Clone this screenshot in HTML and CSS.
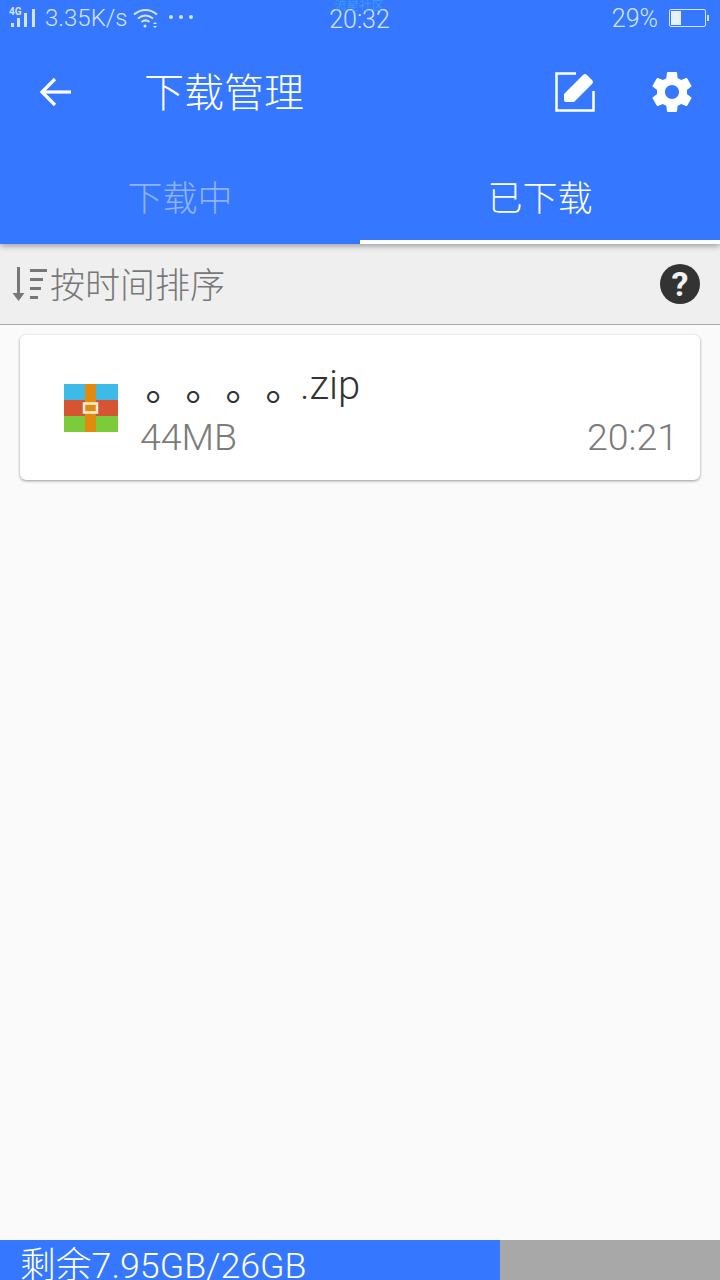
FILE: index.html
```html
<!DOCTYPE html>
<html>
<head>
  <meta charset="utf-8">
  <link rel="stylesheet" href="styles.css">
</head>
<body>
  <div class="page">
    <header class="top">
      <!-- status bar -->
      <div class="status">
        <div class="status-left">
          <svg class="signal" width="28" height="20" viewBox="0 0 28 20">
            <rect x="1" y="15" width="3" height="4" fill="#d5e3ff"/>
            <rect x="7" y="10" width="3" height="9" fill="#d5e3ff"/>
            <rect x="14" y="5" width="3" height="14" fill="#d5e3ff"/>
            <rect x="22" y="1" width="3" height="18" fill="#d5e3ff"/>
          </svg>
          <span class="mini-net">4G</span>
          <span class="speed">3.35K/s</span>
          <svg class="wifi" width="26" height="22" viewBox="0 0 26 22" fill="none" stroke="#d5e3ff" stroke-width="2">
            <path d="M1 7.500C8 1.500 17 1.500 24 7.500"/>
            <path d="M5 11.500C10 7.500 15 7.500 20 11.500"/>
            <path d="M8.500 15C11 13 14 13 16.500 15"/>
            <circle cx="12" cy="19" r="1.500" fill="#d5e3ff" stroke="none"/>
            <path d="M20 17l2-2 2 2zM20 19l2 2 2-2z" fill="#d5e3ff" stroke="none"/>
          </svg>
          <span class="dots"><i></i><i></i><i></i></span>
        </div>
        <div class="status-time">
          <span class="watermark">流星社区</span>
          <span>20:32</span>
        </div>
        <div class="status-right">
          <span>29%</span>
          <span class="battery"><span class="battery-fill"></span></span>
          <span class="battery-tip"></span>
        </div>
      </div>

      <!-- title bar -->
      <div class="titlebar">
        <svg class="back" width="36" height="32" viewBox="0 0 36 32" fill="none" stroke="#fff" stroke-width="3.200">
          <path d="M34 16H5"/>
          <path d="M18 3L5 16l13 13"/>
        </svg>
        <h1>下载管理</h1>
        <svg class="edit" width="42" height="42" viewBox="0 0 42 42">
          <path d="M22 2.500H2.500v37h37V20" fill="none" stroke="#fff" stroke-width="2.500"/>
          <path d="M10 23L29 4q2-2 4 0l5 5q2 2 0 4L20 31H12q-2 0-2-2z" fill="#fff"/>
        </svg>
        <svg class="gear" width="48" height="48" viewBox="0 0 24 24">
          <path fill="#fff" d="M19.430 12.980c.04-.32.07-.64.07-.98s-.03-.66-.07-.98l2.110-1.650c.19-.15.240-.42.120-.64l-2-3.460c-.12-.22-.39-.3-.61-.22l-2.490 1c-.52-.4-1.080-.73-1.690-.98l-.38-2.650C14.460 2.180 14.250 2 14 2h-4c-.25 0-.46.18-.49.420l-.38 2.650c-.61.250-1.170.59-1.690.98l-2.490-1c-.23-.09-.49 0-.61.220l-2 3.460c-.13.220-.07.490.12.640l2.110 1.650c-.04.32-.07.650-.07.980s.03.660.07.980l-2.110 1.650c-.19.150-.24.420-.12.640l2 3.460c.12.220.39.300.61.220l2.490-1c.52.400 1.080.730 1.690.980l.38 2.650c.03.240.24.420.49.420h4c.25 0 .46-.18.490-.42l.38-2.650c.61-.25 1.170-.59 1.690-.98l2.490 1c.23.090.49 0 .61-.22l2-3.460c.12-.22.070-.49-.12-.64l-2.110-1.650zM12 15.500c-1.930 0-3.500-1.570-3.500-3.500s1.570-3.500 3.500-3.500 3.500 1.570 3.500 3.500-1.570 3.500-3.500 3.500z"/>
        </svg>
      </div>

      <!-- tabs -->
      <div class="tabs">
        <div class="tab">下载中</div>
        <div class="tab active">已下载</div>
      </div>
    </header>

    <div class="sortbar">
      <svg class="sort-icon" width="38" height="38" viewBox="0 0 38 38">
        <rect x="6" y="2" width="3" height="28" fill="#777"/>
        <path d="M1.500 28h12l-6 8z" fill="#777"/>
        <rect x="19" y="4" width="17" height="3" fill="#777"/>
        <rect x="19" y="13" width="13" height="3" fill="#777"/>
        <rect x="19" y="22" width="11" height="3" fill="#777"/>
        <rect x="19" y="31" width="8" height="3" fill="#777"/>
      </svg>
      <span class="sort-label">按时间排序</span>
      <span class="help">?</span>
    </div>

    <main class="list">
      <div class="card">
        <svg class="zip-icon" width="54" height="48" viewBox="0 0 54 48">
          <rect width="54" height="16" fill="#3dbbe8"/>
          <rect y="16" width="54" height="16" fill="#d75433"/>
          <rect y="32" width="54" height="16" fill="#7ccb3b"/>
          <rect x="21" width="11" height="48" fill="#e08a10"/>
          <rect x="20" y="19.500" width="13" height="9" fill="#e08a10" stroke="#fbeedd" stroke-width="2.500"/>
        </svg>
        <div class="file-info">
          <div class="file-name"><span class="circles">。。。。</span>.zip</div>
          <div class="file-meta">
            <span>44MB</span>
            <span>20:21</span>
          </div>
        </div>
      </div>
    </main>

    <footer class="storage">
      <div class="storage-used">剩余7.95GB/26GB</div>
    </footer>
  </div>
</body>
</html>
```

FILE: styles.css
```css
html, body {
  margin: 0;
  padding: 0;
}

body {
  width: 720px;
  height: 1280px;
  overflow: hidden;
  background: #fafafa;
  font-family: "Roboto", "Noto Sans CJK SC", sans-serif;
}

.page {
  display: flex;
  flex-direction: column;
  height: 1280px;
}

/* blue header */
.top {
  background: #3578ff;
  color: #fff;
  height: 244px;
  flex-shrink: 0;
  display: flex;
  flex-direction: column;
  position: relative;
  z-index: 2;
  box-shadow: 0 2px 6px rgba(0, 0, 0, 0.35);
}

.status {
  height: 36px;
  padding: 0 11px 0 10px;
  display: grid;
  grid-template-columns: 1fr auto 1fr;
  align-items: center;
  color: #d5e3ff;
  font-size: 24px;
}

.status-left {
  display: flex;
  align-items: center;
  position: relative;
}

.mini-net {
  position: absolute;
  left: -1px;
  top: 3px;
  font-size: 10px;
  font-weight: 700;
  line-height: 10px;
}

.speed {
  margin-left: 7px;
  font-weight: 300;
}

.wifi {
  margin-left: 5px;
}

.dots {
  display: flex;
  gap: 6px;
  margin-left: 10px;
  margin-top: -2px;
}

.dots i {
  width: 4px;
  height: 4px;
  border-radius: 50%;
  background: #d5e3ff;
}

.status-time {
  position: relative;
  font-weight: 300;
  font-size: 25px;
  padding-top: 3px;
}

.watermark {
  position: absolute;
  left: 5px;
  top: -2px;
  font-size: 12.500px;
  line-height: 12px;
  color: #3aa8f8;
  white-space: nowrap;
}

.status-right {
  display: flex;
  align-items: center;
  justify-content: flex-end;
  font-size: 25px;
  font-weight: 300;
}

.battery {
  width: 37px;
  height: 18px;
  box-sizing: border-box;
  margin-left: 11px;
  border: 1px solid #d5e3ff;
  border-radius: 2px;
  padding: 1px;
  display: flex;
}

.battery-fill {
  width: 10px;
  background: #e8f0ff;
}

.battery-tip {
  width: 2px;
  height: 6px;
  margin-left: 1px;
  background: #d5e3ff;
}

.titlebar {
  height: 108px;
  display: flex;
  align-items: center;
  padding-left: 37px;
  margin-top: 3px;
}

.back {
  flex-shrink: 0;
  margin-top: -2px;
}

.titlebar h1 {
  margin: 2px 0 0 71px;
  font-size: 40px;
  font-weight: 300;
  line-height: 44px;
  flex: 1;
}

.edit {
  margin-right: 52px;
  margin-top: -3px;
}

.gear {
  margin-right: 24px;
  margin-top: -3px;
}

.tabs {
  display: flex;
  height: 97px;
}

.tab {
  flex: 1;
  text-align: center;
  font-size: 35px;
  font-weight: 300;
  line-height: 106px;
  color: #8fb4ff;
}

.tab.active {
  color: #fff;
  border-bottom: 4px solid #fff;
  height: 93px;
}

/* sort row */
.sortbar {
  height: 80px;
  flex-shrink: 0;
  background: #efefef;
  border-bottom: 1px solid #aaa;
  display: flex;
  align-items: center;
  padding: 0 20px 0 11px;
}

.sort-icon {
  flex-shrink: 0;
}

.sort-label {
  flex: 1;
  margin-left: 1px;
  margin-bottom: 4px;
  font-size: 35px;
  font-weight: 300;
  color: #777;
}

.help {
  width: 40px;
  height: 40px;
  border-radius: 50%;
  background: #333;
  color: #f2f2f2;
  font-size: 34px;
  font-weight: 700;
  line-height: 40px;
  text-align: center;
}

/* file list */
.list {
  flex: 1;
  padding: 10px 20px;
}

.card {
  height: 145px;
  box-sizing: border-box;
  background: #fff;
  border-radius: 6px;
  box-shadow: 0 1px 3px rgba(0, 0, 0, 0.4);
  display: flex;
  padding: 27px 22px 0 44px;
}

.zip-icon {
  flex-shrink: 0;
  margin-top: 22px;
}

.file-info {
  flex: 1;
  margin-left: 22px;
}

.file-name {
  font-size: 40px;
  font-weight: 300;
  line-height: 48px;
  color: #333;
  height: 53px;
  margin-left: -7px;
  white-space: nowrap;
}

.circles {
  font-family: "Noto Sans CJK TC", sans-serif;
  font-size: 40px;
  font-weight: 400;
  vertical-align: -13px;
  line-height: 0;
  margin-right: 7px;
}

.file-meta {
  display: flex;
  justify-content: space-between;
  font-size: 37.500px;
  font-weight: 300;
  line-height: 44px;
  color: #7b7b7b;
}

/* storage bar */
.storage {
  height: 40px;
  flex-shrink: 0;
  background: #a8a8a8;
  overflow: hidden;
}

.storage-used {
  width: 500px;
  height: 40px;
  background: #3578ff;
  color: #fff;
  box-sizing: border-box;
  padding-left: 20px;
  font-size: 35.800px;
  font-weight: 300;
  line-height: 52px;
  white-space: nowrap;
}
```
